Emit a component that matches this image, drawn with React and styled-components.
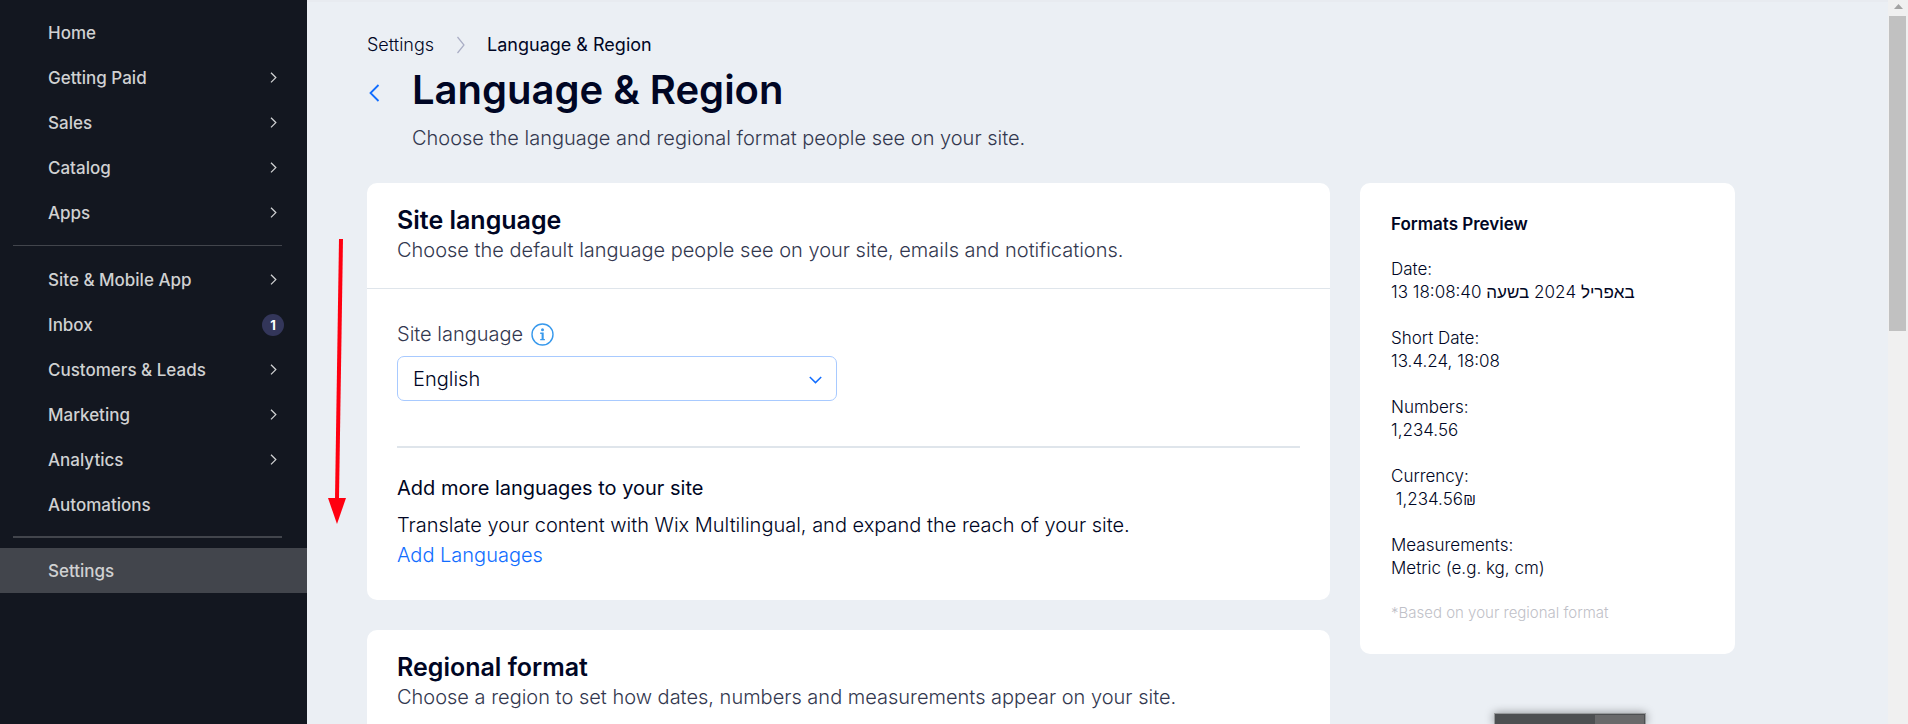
import React from "react";
import styled, { createGlobalStyle, css } from "styled-components";

const GlobalStyle = createGlobalStyle`
  *, *::before, *::after { box-sizing: border-box; }
  body { margin: 0; background: #ebeff4; }
  body, button, select { font-family: Inter, "Liberation Sans", "DejaVu Sans", sans-serif; }
  h1, h2, h3, p, ul, ol, dl, dd { margin: 0; padding: 0; }
  ul, ol { list-style: none; }
`;

const Shell = styled.div`
  display: flex;
  height: 100vh;
  overflow: hidden;
  color: #000624;
`;

const Sidebar = styled.nav`
  flex: 0 0 307px;
  padding-top: 10px;
  background: #131720;
`;

const NavList = styled.ul`
  ${(p) =>
    p.$rule &&
    css`
      &::before {
        content: "";
        display: block;
        height: ${p.$rule}px;
        margin: ${p.$rule > 1 ? "9px 25px 10px 13px" : "10px 25px 11px 13px"};
        background: #42454c;
      }
    `}
`;

const NavLink = styled.a`
  display: flex;
  align-items: center;
  justify-content: space-between;
  height: 45px;
  padding: 0 30px 0 48px;
  background: ${(p) => (p.$active ? "#42454c" : "transparent")};
  color: #d0d1d2;
  font-size: 17px;
  font-weight: 500;
  line-height: 24px;
  text-decoration: none;
`;

const Badge = styled.span`
  width: 22px;
  height: 22px;
  margin-right: -7px;
  border-radius: 11px;
  background: #33365a;
  color: #fff;
  font-size: 13px;
  font-weight: 700;
  line-height: 22px;
  text-align: center;
`;

const Main = styled.main`
  position: relative;
  flex: 1;
  min-width: 0;
  padding: 31px 60px 0;
  overflow: hidden;
  background: #ebeff4;
  box-shadow: inset 0 2px #e8ebf0;
`;

const Content = styled.div`
  max-width: 1368px;
`;

const Crumbs = styled.ol`
  display: flex;
  align-items: center;
  font-size: 18px;
  line-height: 28px;
`;

const Crumb = styled.li`
  display: flex;
  align-items: center;
  font-weight: ${(p) => (p.$current ? 400 : 300)};
  a { color: inherit; text-decoration: none; }
  svg { margin: 0 21px 0 22px; }
`;

const Heading = styled.header`
  display: flex;
  gap: 30px;
  padding-bottom: 31px;
`;

const BackButton = styled.button`
  display: flex;
  align-items: center;
  width: 15px;
  height: 68px;
  padding: 0;
  border: 0;
  background: none;
  cursor: pointer;
`;

const PageTitle = styled.h1`
  padding-top: 5px;
  font-size: 40px;
  font-weight: 600;
  line-height: 52px;
`;

const Lead = styled.p`
  color: #33384f;
  font-size: 20px;
  font-weight: 300;
  line-height: 30px;
`;

const TitleBlock = styled.div`
  ${Lead} { padding-top: 8px; line-height: 28px; }
`;

const Columns = styled.div`
  display: flex;
  align-items: flex-start;
  gap: 30px;
`;

const Stack = styled.div`
  flex: 1;
  min-width: 0;
  display: grid;
  gap: 30px;
`;

const Card = styled.section`
  border-radius: 10px;
  background: #fff;
`;

const CardHeader = styled.header`
  padding: 22px 30px 23px;
  border-bottom: 1px solid #dfe5eb;
`;

const CardTitle = styled.h2`
  font-size: 25px;
  font-weight: 600;
  line-height: 30px;
`;

const CardBody = styled.div`
  padding: 30px;
`;

const LabelRow = styled.div`
  display: flex;
  align-items: center;
  gap: 8px;
  height: 30px;
`;

const Label = styled.label`
  color: #33384f;
  font-size: 20px;
  font-weight: 300;
`;

const InfoButton = styled.button`
  display: flex;
  padding: 0;
  border: 0;
  background: none;
`;

const SelectWrap = styled.div`
  position: relative;
  max-width: 440px;
  margin-top: 7px;
  svg {
    position: absolute;
    top: 20px;
    right: 15px;
    pointer-events: none;
  }
`;

const Select = styled.select`
  display: block;
  width: 100%;
  height: 45px;
  padding: 1px 40px 0 15px;
  border: 1px solid #a8caff;
  border-radius: 7px;
  background: #fff;
  color: #000624;
  font-size: 20px;
  font-weight: 300;
  appearance: none;
`;

const Promo = styled.div`
  margin-top: 45px;
  padding-top: 25px;
  border-top: 2px solid #dfe5eb;
  font-size: 20px;
  font-weight: 300;
  line-height: 30px;
`;

const PromoTitle = styled.h3`
  margin-bottom: 7px;
  font-size: 20px;
  font-weight: 400;
  line-height: 30px;
`;

const TextLink = styled.a`
  color: #116dff;
  text-decoration: none;
`;

const PreviewCard = styled(Card).attrs({ as: "aside" })`
  flex: 0 0 375px;
  padding: 30px 31px;
  font-size: 17px;
  font-weight: 300;
  line-height: 23px;
`;

const PreviewTitle = styled.h3`
  font-size: 17px;
  font-weight: 600;
  line-height: 22px;
`;

const Format = styled.div`
  padding-top: 23px;
  dd { white-space: pre; }
`;

const Note = styled.p`
  padding-top: 21px;
  color: #bfc1c8;
  font-size: 15px;
  line-height: 23px;
`;

const Scrollbar = styled.div`
  flex: 0 0 20px;
  display: flex;
  flex-direction: column;
  align-items: center;
  background: #f0f0f0;
  svg { margin: 4px 0 7px; }
`;

const Thumb = styled.div`
  width: 17px;
  height: 315px;
  margin-right: 1px;
  background: #c1c1c1;
`;

const Arrow = styled.svg`
  position: absolute;
  top: 239px;
  left: 20px;
`;

const DockedBar = styled.div`
  position: fixed;
  right: 262px;
  bottom: 0;
  display: grid;
  grid-template-columns: 2fr 1fr;
  width: 152px;
  height: 11px;
  border: 1px solid #97999b;
  border-bottom: 0;
  background: #4d4f51;
  box-shadow: 0 0 10px rgba(0, 0, 0, 0.4);
  &::after {
    content: "";
    grid-column: 2;
    margin: 1px 1px 0 0;
    background: #69696a;
  }
`;

const NavChevron = () => (
  <svg width="8" height="12" viewBox="0 0 8 12" fill="none" stroke="#d0d1d2" strokeWidth="1.3" aria-hidden="true">
    <path d="M2 .8 6.8 5.6 2 10.4" />
  </svg>
);

const groups = [
  {
    items: [
      { label: "Home" },
      { label: "Getting Paid", more: true },
      { label: "Sales", more: true },
      { label: "Catalog", more: true },
      { label: "Apps", more: true },
    ],
  },
  {
    rule: 1,
    items: [
      { label: "Site & Mobile App", more: true },
      { label: "Inbox", badge: 1 },
      { label: "Customers & Leads", more: true },
      { label: "Marketing", more: true },
      { label: "Analytics", more: true },
      { label: "Automations" },
    ],
  },
  { rule: 2, items: [{ label: "Settings", active: true }] },
];

const formats = [
  ["Date:", "13 באפריל 2024 בשעה 18:08:40"],
  ["Short Date:", "13.4.24, 18:08"],
  ["Numbers:", "1,234.56"],
  ["Currency:", " 1,234.56₪"],
  ["Measurements:", "Metric (e.g. kg, cm)"],
];

export default function App() {
  return (
    <>
      <GlobalStyle />
      <Shell>
        <Sidebar aria-label="Dashboard">
          {groups.map((group, i) => (
            <NavList key={i} $rule={group.rule}>
              {group.items.map((item) => (
                <li key={item.label}>
                  <NavLink href="#" $active={item.active} aria-current={item.active ? "page" : undefined}>
                    {item.label}
                    {item.more && <NavChevron />}
                    {item.badge && <Badge>{item.badge}</Badge>}
                  </NavLink>
                </li>
              ))}
            </NavList>
          ))}
        </Sidebar>

        <Main>
          <Content>
            <Crumbs>
              <Crumb>
                <a href="#">Settings</a>
                <svg width="10" height="18" viewBox="0 0 10 18" fill="none" stroke="#a9adc4" strokeWidth="1.2" aria-hidden="true">
                  <path d="M1.5 1 8 9 1.5 17" />
                </svg>
              </Crumb>
              <Crumb $current aria-current="page">Language &amp; Region</Crumb>
            </Crumbs>

            <Heading>
              <BackButton aria-label="Back">
                <svg width="15" height="20" viewBox="0 0 15 20" fill="none" stroke="#116dff" strokeWidth="1.8">
                  <path d="M11.5 2 3.5 10l8 8" />
                </svg>
              </BackButton>
              <TitleBlock>
                <PageTitle>Language &amp; Region</PageTitle>
                <Lead>Choose the language and regional format people see on your site.</Lead>
              </TitleBlock>
            </Heading>

            <Columns>
              <Stack>
                <Card>
                  <CardHeader>
                    <CardTitle>Site language</CardTitle>
                    <Lead>Choose the default language people see on your site, emails and notifications.</Lead>
                  </CardHeader>
                  <CardBody>
                    <LabelRow>
                      <Label htmlFor="site-language">Site language</Label>
                      <InfoButton aria-label="More information">
                        <svg width="23" height="23" viewBox="0 0 23 23" fill="none">
                          <circle cx="11.5" cy="11.5" r="10.5" stroke="#3899ec" strokeWidth="1.4" />
                          <circle cx="11.5" cy="6.7" r="1.5" fill="#3899ec" />
                          <path d="M9.2 9.6h3.5v6.3h1.2v1.3H9.2v-1.3h1.4v-5H9.2z" fill="#3899ec" />
                        </svg>
                      </InfoButton>
                    </LabelRow>
                    <SelectWrap>
                      <Select id="site-language" defaultValue="English">
                        <option>English</option>
                      </Select>
                      <svg width="13" height="8" viewBox="0 0 13 8" fill="none" stroke="#116dff" strokeWidth="1.5" aria-hidden="true">
                        <path d="M.8 1 6.5 6.6 12.2 1" />
                      </svg>
                    </SelectWrap>
                    <Promo>
                      <PromoTitle>Add more languages to your site</PromoTitle>
                      <p>Translate your content with Wix Multilingual, and expand the reach of your site.</p>
                      <TextLink href="#">Add Languages</TextLink>
                    </Promo>
                  </CardBody>
                </Card>

                <Card>
                  <CardHeader>
                    <CardTitle>Regional format</CardTitle>
                    <Lead>Choose a region to set how dates, numbers and measurements appear on your site.</Lead>
                  </CardHeader>
                </Card>
              </Stack>

              <PreviewCard>
                <PreviewTitle>Formats Preview</PreviewTitle>
                <dl>
                  {formats.map(([term, value]) => (
                    <Format key={term}>
                      <dt>{term}</dt>
                      <dd>{value}</dd>
                    </Format>
                  ))}
                </dl>
                <Note>*Based on your regional format</Note>
              </PreviewCard>
            </Columns>
          </Content>

          <Arrow width="30" height="290" viewBox="0 0 30 290" aria-hidden="true">
            <path d="M14 0 10 260" stroke="#ff0010" strokeWidth="4" />
            <path d="M1 259h18l-9 26z" fill="#ff0010" />
          </Arrow>
        </Main>

        <Scrollbar aria-hidden="true">
          <svg width="9" height="5" viewBox="0 0 9 5" fill="#a3a3a3">
            <path d="M4.5 0 9 5H0z" />
          </svg>
          <Thumb />
        </Scrollbar>
        <DockedBar />
      </Shell>
    </>
  );
}
